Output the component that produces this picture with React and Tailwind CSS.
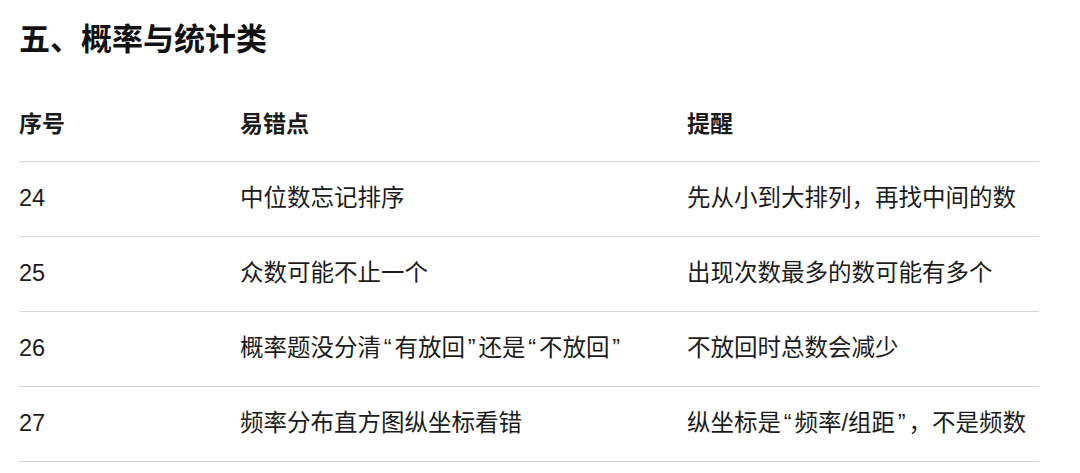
import React from "react";

const OQ = () => <span className="inline-block w-[13.5px] text-center">“</span>;
const CQ = () => <span className="inline-block w-[13.5px] text-center">”</span>;

const rows = [
  ["24", "中位数忘记排序", "先从小到大排列，再找中间的数"],
  ["25", "众数可能不止一个", "出现次数最多的数可能有多个"],
  [
    "26",
    <>概率题没分清<OQ />有放回<CQ />还是<OQ />不放回<CQ /></>,
    "不放回时总数会减少",
  ],
  ["27", "频率分布直方图纵坐标看错", <>纵坐标是<OQ />频率/组距<CQ />，不是频数</>],
];

export default function App() {
  return (
    <div
      className="w-[1080px] h-[473px] bg-white text-[#1c1c1c] overflow-hidden"
      style={{ fontFamily: '"Liberation Sans", "Noto Sans CJK SC", sans-serif' }}
    >
      <div className="pl-[19px] w-[1039px]">
        <h1 className="pt-[20px] h-[60px] text-[31px] leading-[40px] font-bold text-[#111]">
          五、概率与统计类
        </h1>
        <div className="mt-[27px]">
          <div className="flex items-center h-[75px] border-b-[1.5px] border-[#d6d6d6] text-[23px] font-bold">
            <div className="w-[221px]">序号</div>
            <div className="w-[447px]">易错点</div>
            <div className="flex-1">提醒</div>
          </div>
          {rows.map((r) => (
            <div
              key={r[0]}
              className="flex items-center h-[75px] border-b-[1.5px] border-[#d6d6d6] text-[23.5px]"
            >
              <div className="w-[221px]">{r[0]}</div>
              <div className="w-[447px] whitespace-nowrap">{r[1]}</div>
              <div className="flex-1 whitespace-nowrap">{r[2]}</div>
            </div>
          ))}
        </div>
      </div>
    </div>
  );
}
